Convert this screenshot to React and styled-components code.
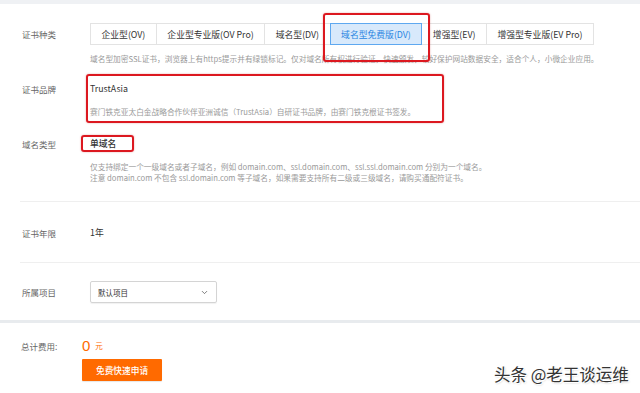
import React from 'react'
import styled, { createGlobalStyle } from 'styled-components'
import { ChevronDown } from 'lucide-react'

const GlobalStyle = createGlobalStyle`
  body {
    margin: 0;
    background: #fff;
    font-family: "Noto Sans CJK SC", "Noto Sans", sans-serif;
  }
`

const tabs = ['企业型(OV)', '企业型专业版(OV Pro)', '域名型(DV)', '域名型免费版(DV)', '增强型(EV)', '增强型专业版(EV Pro)']

const App = () => {
  return (
    <Page>
      <GlobalStyle />
      <TopBar />
      <Form>
        <Row>
          <Label $h={22}>证书种类</Label>
          <Content>
            <Tabs>
              {tabs.map((t, i) => (
                <Tab key={t} $active={i === 3}>
                  {t}
                  {i === 3 && <Mark $top={-11} $bottom={-18} $left={-8} $right={-9} />}
                </Tab>
              ))}
            </Tabs>
            <Desc $mt={8}>域名型加密SSL证书，浏览器上有https提示并有绿锁标记。仅对域名所有权进行验证，快速颁发，较好保护网站数据安全，适合个人，小微企业应用。</Desc>
          </Content>
        </Row>

        <Row $mt={18}>
          <Label>证书品牌</Label>
          <Content>
            <Marked>
              <Value>TrustAsia</Value>
              <Desc $mt={10}>赛门铁克亚太白金战略合作伙伴亚洲诚信（TrustAsia）自研证书品牌，由赛门铁克根证书签发。</Desc>
              <Mark $top={-8} $bottom={-6} $left={-4} $width={354} />
            </Marked>
          </Content>
        </Row>

        <Row $mt={20}>
          <Label>域名类型</Label>
          <Content>
            <Marked>
              <Value $bold>单域名</Value>
              <Mark $top={-2} $bottom={-1} $left={-9} $right={-18} />
            </Marked>
            <Desc $mt={10}>仅支持绑定一个一级域名或者子域名，例如 domain.com、ssl.domain.com、ssl.ssl.domain.com 分别为一个域名。</Desc>
            <Desc>注意 domain.com 不包含 ssl.domain.com 等子域名，如果需要支持所有二级或三级域名，请购买通配符证书。</Desc>
          </Content>
        </Row>

        <Divider $mt={18} />

        <Row $mt={24}>
          <Label>证书年限</Label>
          <Content>
            <Value>1年</Value>
          </Content>
        </Row>

        <Divider $mt={22} />

        <Row $mt={18}>
          <Label $h={22}>所属项目</Label>
          <Content>
            <Select>
              <span>默认项目</span>
              <ChevronDown size={9} strokeWidth={2} color="#555" />
            </Select>
          </Content>
        </Row>
      </Form>

      <Footer>
        <TotalRow>
          <FooterLabel>总计费用:</FooterLabel>
          <Price>0<Unit>元</Unit></Price>
        </TotalRow>
        <ApplyButton>免费快速申请</ApplyButton>
      </Footer>

      <Watermark>头条 @老王谈运维</Watermark>
    </Page>
  )
}

const Page = styled.div`
  position: relative;
  width: 640px;
  height: 393px;
  overflow: hidden;
  background: #fff;
`

const TopBar = styled.div`
  height: 4px;
  background: #eff1f4;
`

const Form = styled.div`
  padding: 19px 0 0 20px;
`

const Row = styled.div`
  display: flex;
  align-items: flex-start;
  margin-top: ${p => p.$mt || 0}px;
`

const Label = styled.div`
  width: 68px;
  padding-left: 2px;
  flex-shrink: 0;
  font-size: 8.5px;
  color: #666;
  line-height: ${p => p.$h || 14}px;
`

const Content = styled.div`
  display: flex;
  flex-direction: column;
  align-items: flex-start;
`

const Tabs = styled.div`
  display: flex;
`

const Tab = styled.div`
  position: relative;
  height: 22px;
  box-sizing: border-box;
  padding: 0 10.5px;
  display: flex;
  align-items: center;
  font-size: 8.8px;
  white-space: nowrap;
  color: ${p => (p.$active ? '#2a86e2' : '#333')};
  background: ${p => (p.$active ? '#d8e9fb' : '#fff')};
  border: 1px solid ${p => (p.$active ? '#5ea8f0' : '#e3e3e3')};
  margin-left: -1px;
  z-index: ${p => (p.$active ? 1 : 0)};
  &:first-child {
    margin-left: 0;
  }
`

const Desc = styled.div`
  font-size: 7.7px;
  line-height: 11px;
  color: #9a9a9a;
  white-space: nowrap;
  margin-top: ${p => p.$mt || 0}px;
`

const Value = styled.div`
  font-size: 8.8px;
  line-height: 14px;
  color: #333;
  font-weight: ${p => (p.$bold ? 500 : 400)};
`

const Marked = styled.div`
  position: relative;
  display: inline-block;
`

const Mark = styled.span`
  position: absolute;
  top: ${p => p.$top}px;
  bottom: ${p => p.$bottom}px;
  left: ${p => p.$left}px;
  ${p => (p.$width ? `width: ${p.$width}px;` : `right: ${p.$right}px;`)}
  border: 2.5px solid #dc1820;
  border-radius: 3px;
  box-shadow: 0 0 2px rgba(180, 0, 0, 0.35);
  pointer-events: none;
`

const Divider = styled.div`
  height: 1px;
  background: #efefef;
  margin-top: ${p => p.$mt || 0}px;
`

const Select = styled.div`
  width: 127px;
  height: 22px;
  box-sizing: border-box;
  border: 1px solid #d4d4d4;
  border-radius: 2px;
  box-shadow: 0 1px 1px rgba(0, 0, 0, 0.06);
  padding: 0 7px 0 7px;
  display: flex;
  align-items: center;
  justify-content: space-between;
  font-size: 7.5px;
  color: #333;
`

const Footer = styled.div`
  margin-top: 17px;
  border-top: 3px solid #e8ebee;
  padding: 15px 0 0 21px;
`

const TotalRow = styled.div`
  display: flex;
  align-items: center;
  height: 16px;
`

const FooterLabel = styled.div`
  width: 61px;
  font-size: 8.5px;
  color: #666;
`

const Price = styled.div`
  font-family: "Liberation Sans", "Noto Sans", sans-serif;
  font-size: 15px;
  line-height: 16px;
  color: #ff6a00;
`

const Unit = styled.span`
  font-family: "Noto Sans CJK SC", sans-serif;
  font-size: 7.5px;
  margin-left: 5px;
  vertical-align: 2px;
`

const ApplyButton = styled.button`
  margin: 5px 0 0 61px;
  width: 80px;
  height: 22px;
  border: none;
  border-radius: 1px;
  background: #ff6a00;
  color: #fff;
  font-family: "Noto Sans CJK SC", sans-serif;
  font-size: 8.7px;
  font-weight: 500;
  padding: 0;
  display: flex;
  align-items: center;
  justify-content: center;
  box-shadow: 0 1px 1px rgba(0, 0, 0, 0.1);
`

const Watermark = styled.div`
  position: absolute;
  left: 494px;
  top: 362px;
  font-size: 16.5px;
  color: #333;
  text-shadow: 1px 1px 0 #fff, -1px -1px 0 #fff, 1px 1px 2px rgba(0, 0, 0, 0.25);
  white-space: nowrap;
`

export default App
